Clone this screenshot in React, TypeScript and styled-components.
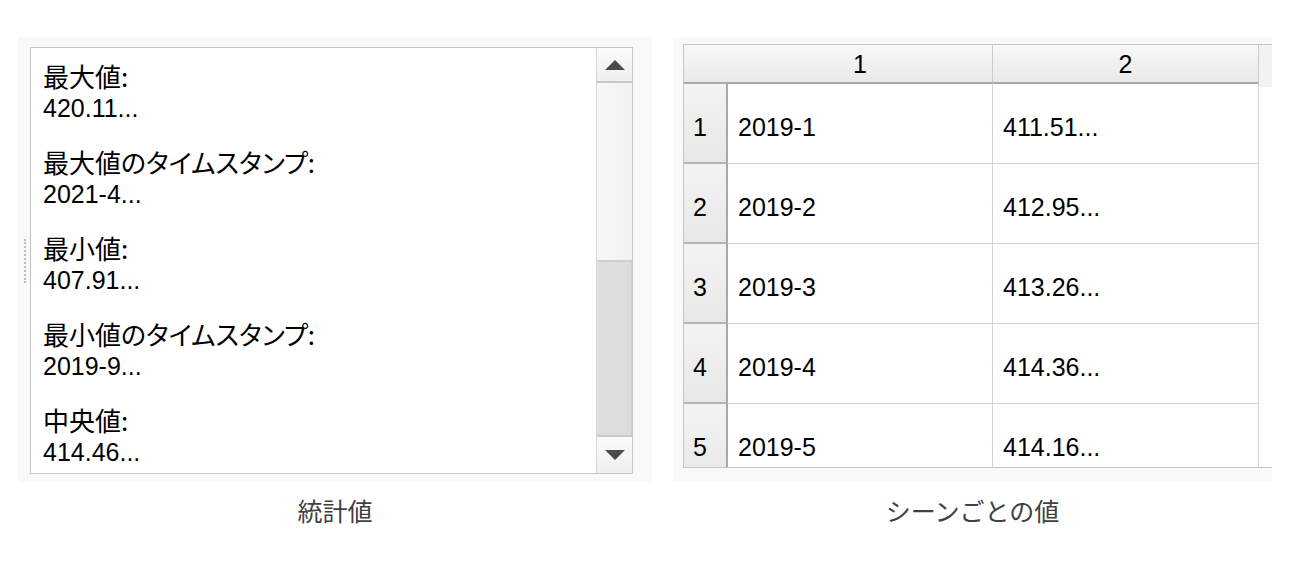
import styled, { createGlobalStyle } from "styled-components";

const GlobalStyle = createGlobalStyle`
    html, body {
        margin: 0;
        padding: 0;
        background: #ffffff;
    }
`;

const Page = styled.div`
    display: flex;
    gap: 21px;
    padding: 37px 0 0 18px;
    font-family: "Liberation Sans", "Noto Sans CJK JP", sans-serif;
    color: #000;
`;

const Column = styled.div<{ $width: number }>`
    display: flex;
    flex-direction: column;
    align-items: center;
    width: ${(p) => p.$width}px;
`;

const Caption = styled.div`
    margin-top: 13px;
    font-family: "Noto Sans CJK JP", sans-serif;
    font-size: 25px;
    line-height: 30px;
    color: #404040;
`;

/* ---------- left : statistics ---------- */

const StatsPanel = styled.div`
    display: flex;
    align-items: center;
    width: 100%;
    height: 445px;
    box-sizing: border-box;
    padding: 10px 19px 8px 0;
    background: #f9f9f9;
`;

const Grip = styled.div`
    width: 2px;
    height: 44px;
    margin: 0 4px 0 6px;
    border-left: 2px dotted #bdbdbd;
    box-sizing: border-box;
`;

const StatsBox = styled.div`
    flex: 1;
    align-self: stretch;
    display: flex;
    background: #fff;
    border: 1px solid #c6c6c6;
    overflow: hidden;
`;

const StatsList = styled.div`
    flex: 1;
    padding: 10px 12px 0;
`;

const StatGroup = styled.div`
    margin-bottom: 21px;
`;

const StatLabel = styled.div`
    font-family: "Noto Sans CJK JP", sans-serif;
    font-feature-settings: "palt";
    font-size: 26px;
    line-height: 35px;
    white-space: nowrap;
`;

const StatValue = styled.div`
    font-size: 25px;
    line-height: 30px;
    white-space: nowrap;
`;

const ScrollBar = styled.div`
    width: 36px;
    display: flex;
    flex-direction: column;
    border-left: 1px solid #d6d6d6;
    background: #f6f6f6;
    box-sizing: border-box;
`;

const ArrowButton = styled.div<{ $h: number; $down?: boolean }>`
    height: ${(p) => p.$h}px;
    display: flex;
    align-items: center;
    justify-content: center;
    background: linear-gradient(#fafafa, #f0f0f0);
    ${(p) => (p.$down ? "border-top: 2px solid #c8c8c8;" : "border-bottom: 2px solid #c8c8c8;")}
    box-sizing: border-box;
`;

const Track = styled.div`
    flex: 1;
    display: flex;
    flex-direction: column;
    background: linear-gradient(90deg, #f7f7f7, #f1f1f1);
`;

const Thumb = styled.div`
    margin-top: auto;
    height: 175px;
    background: #dddddd;
    border-top: 2px solid #cfcfcf;
    border-left: 1px solid #e4e4e4;
    border-right: 1px solid #d0d0d0;
    box-sizing: border-box;
`;

const Triangle = ({ down }: { down?: boolean }) => (
    <svg width="22" height="12" viewBox="0 0 22 12">
        <path d={down ? "M1 1 H21 L11 11 Z" : "M1 11 H21 L11 1 Z"} fill="#4a4a4a" />
    </svg>
);

const stats = [
    { label: "最大値:", value: "420.11..." },
    { label: "最大値のタイムスタンプ:", value: "2021-4..." },
    { label: "最小値:", value: "407.91..." },
    { label: "最小値のタイムスタンプ:", value: "2019-9..." },
    { label: "中央値:", value: "414.46..." },
];

/* ---------- right : per-scene table ---------- */

const TablePanel = styled.div`
    width: 100%;
    height: 445px;
    box-sizing: border-box;
    padding: 7px 0 14px 10px;
    background: #f9f9f9;
    display: flex;
`;

const Grid = styled.div`
    flex: 1;
    display: grid;
    grid-template-columns: 44px 265px 266px 1fr;
    grid-auto-rows: 80px;
    grid-template-rows: 39px;
    background: #fff;
    border-top: 1px solid #c6c6c6;
    border-left: 1px solid #c6c6c6;
    border-bottom: 1px solid #c6c6c6;
    overflow: hidden;
`;

const HeadCell = styled.div<{ $corner?: boolean }>`
    display: flex;
    align-items: center;
    justify-content: center;
    background: linear-gradient(#f8f8f8, #e9e9e9);
    border-bottom: 2px solid #a9a9a9;
    border-right: ${(p) => (p.$corner ? "none" : "1px solid #cbcbcb")};
    font-size: 25px;
    padding-top: 2px;
    box-sizing: border-box;
`;

const HeadFiller = styled.div`
    background: #f2f2f2;
    height: 42px;
`;

const RowHead = styled.div`
    display: flex;
    align-items: center;
    padding: 8px 0 0 9px;
    background: linear-gradient(#f4f4f4, #e7e7e7);
    border-right: 2px solid #a9a9a9;
    border-bottom: 2px solid #b4b4b4;
    font-size: 25px;
    box-sizing: border-box;
`;

const Cell = styled.div`
    display: flex;
    align-items: center;
    padding: 8px 0 0 10px;
    border-right: 1px solid #d4d4d4;
    border-bottom: 1px solid #d4d4d4;
    font-size: 25px;
    box-sizing: border-box;
`;

const Blank = styled.div``;

const rows = [
    { date: "2019-1", value: "411.51..." },
    { date: "2019-2", value: "412.95..." },
    { date: "2019-3", value: "413.26..." },
    { date: "2019-4", value: "414.36..." },
    { date: "2019-5", value: "414.16..." },
];

export default function App() {
    return (
        <>
            <GlobalStyle />
            <Page>
                <Column $width={634}>
                    <StatsPanel>
                        <Grip />
                        <StatsBox>
                            <StatsList>
                                {stats.map((s) => (
                                    <StatGroup key={s.label}>
                                        <StatLabel>{s.label}</StatLabel>
                                        <StatValue>{s.value}</StatValue>
                                    </StatGroup>
                                ))}
                            </StatsList>
                            <ScrollBar>
                                <ArrowButton $h={35}>
                                    <Triangle />
                                </ArrowButton>
                                <Track>
                                    <Thumb />
                                </Track>
                                <ArrowButton $h={38} $down>
                                    <Triangle down />
                                </ArrowButton>
                            </ScrollBar>
                        </StatsBox>
                    </StatsPanel>
                    <Caption>統計値</Caption>
                </Column>

                <Column $width={599}>
                    <TablePanel>
                        <Grid>
                            <HeadCell $corner />
                            <HeadCell>1</HeadCell>
                            <HeadCell>2</HeadCell>
                            <HeadFiller />
                            {rows.map((r, i) => (
                                <>
                                    <RowHead key={"h" + i}>{i + 1}</RowHead>
                                    <Cell key={"d" + i}>{r.date}</Cell>
                                    <Cell key={"v" + i}>{r.value}</Cell>
                                    <Blank key={"b" + i} />
                                </>
                            ))}
                        </Grid>
                    </TablePanel>
                    <Caption>シーンごとの値</Caption>
                </Column>
            </Page>
        </>
    );
}
